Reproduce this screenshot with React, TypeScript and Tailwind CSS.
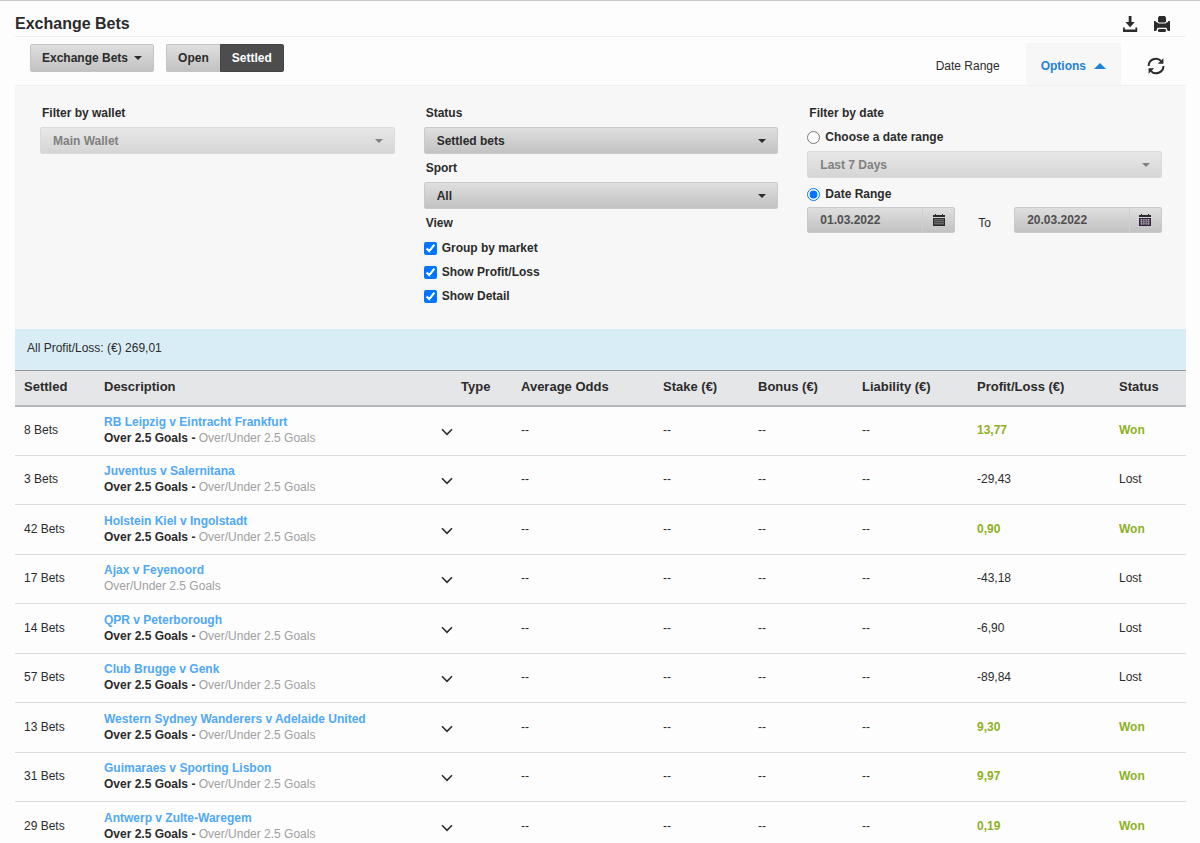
import type { ReactNode } from "react";
import clsx from "clsx";

type Bet = {
  count: number;
  event: string;
  selection?: string;
  profit: string;
  won: boolean;
};

const bets: Bet[] = [
  { count: 8, event: "RB Leipzig v Eintracht Frankfurt", selection: "Over 2.5 Goals", profit: "13,77", won: true },
  { count: 3, event: "Juventus v Salernitana", selection: "Over 2.5 Goals", profit: "-29,43", won: false },
  { count: 42, event: "Holstein Kiel v Ingolstadt", selection: "Over 2.5 Goals", profit: "0,90", won: true },
  { count: 17, event: "Ajax v Feyenoord", profit: "-43,18", won: false },
  { count: 14, event: "QPR v Peterborough", selection: "Over 2.5 Goals", profit: "-6,90", won: false },
  { count: 57, event: "Club Brugge v Genk", selection: "Over 2.5 Goals", profit: "-89,84", won: false },
  { count: 13, event: "Western Sydney Wanderers v Adelaide United", selection: "Over 2.5 Goals", profit: "9,30", won: true },
  { count: 31, event: "Guimaraes v Sporting Lisbon", selection: "Over 2.5 Goals", profit: "9,97", won: true },
  { count: 29, event: "Antwerp v Zulte-Waregem", selection: "Over 2.5 Goals", profit: "0,19", won: true },
];

const columns = [
  { title: "Settled", width: "w-[80px]" },
  { title: "Description", width: "w-[337px]" },
  { title: "", width: "w-[20px]" },
  { title: "Type", width: "w-[60px]" },
  { title: "Average Odds", width: "w-[142px]" },
  { title: "Stake (€)", width: "w-[95px]" },
  { title: "Bonus (€)", width: "w-[104px]" },
  { title: "Liability (€)", width: "w-[115px]" },
  { title: "Profit/Loss (€)", width: "w-[142px]" },
  { title: "Status", width: "w-[76px]" },
];

function Caret({ className }: { className?: string }) {
  return (
    <svg viewBox="0 0 8 4" className={clsx("h-1 w-2 fill-current", className)} aria-hidden="true">
      <path d="M0 0h8L4 4z" />
    </svg>
  );
}

function DownloadIcon() {
  return (
    <svg viewBox="0 0 16 16" className="size-4 fill-current" aria-hidden="true">
      <path d="M6.7 0h2.8v6h3.3l-4.7 5.2L3.4 6h3.3z" />
      <path d="M1 11.5h1.8v2h10.6v-2h1.8V16H1z" />
    </svg>
  );
}

function PrintIcon() {
  return (
    <svg viewBox="0 0 16 16" className="size-4 fill-current" aria-hidden="true">
      <path d="M5.2 0h5.6L12 1.4v3.8L10.8 6.4H5.2L4 5.2V1.4z" />
      <path d="M0 5h1.8v1.2h1.4l1.4 1.2h6.8l1.4-1.2h1.4V5H16v10h-2.2l-1.4-3.2H3.6L2.2 15H0z" />
      <path d="M4.6 13h6.8l.8 1.5-.8 1.5H4.6l-.8-1.5z" />
    </svg>
  );
}

function RefreshIcon() {
  return (
    <svg viewBox="0 0 18 18" className="size-[18px]" aria-hidden="true">
      <g fill="none" stroke="currentColor" strokeWidth="2">
        <path d="M1.6 9A7.2 7.2 0 0 1 14.2 4.2" />
        <path d="M16.4 9A7.2 7.2 0 0 1 3.8 13.8" />
      </g>
      <path fill="currentColor" d="M16.4 1.2v5.6h-5.6zM1.6 16.8v-5.6h5.6z" />
    </svg>
  );
}

function CalendarIcon({ grid }: { grid?: boolean }) {
  return (
    <svg viewBox="0 0 12 12" className="size-3" aria-hidden="true">
      <path fill="#2b2b2b" d="M0 1h2V0h1v1h6V0h1v1h2v2H0z" />
      <path fill={grid ? "#33203a" : "#2b2b2b"} d="M0 4h12v8H0z" />
      <path stroke="#c4c4c4" strokeWidth=".6" d="M1 5.8h10M1 7.8h10M1 9.8h10" />
      {grid && <path stroke="#c4c4c4" strokeWidth=".6" d="M2.5 5v6M4.8 5v6M7.2 5v6M9.5 5v6" />}
    </svg>
  );
}

type SelectFieldProps = { id: string; value: string; label?: string; disabled?: boolean };

function SelectField({ id, value, label, disabled }: SelectFieldProps) {
  return (
    <div className={clsx("relative", disabled ? "text-[#808080]" : "text-[#2b2b2b]")}>
      <select
        id={id}
        disabled={disabled}
        aria-label={label}
        className={clsx(
          "block h-[27px] w-full appearance-none rounded-xs border bg-linear-to-b px-3 text-xs font-bold",
          disabled ? "border-[#dadada] from-[#e8e8e8] to-[#d5d5d5]" : "border-[#c8cacb] from-[#dfdfdf] to-[#c2c2c2]"
        )}
      >
        <option>{value}</option>
      </select>
      <Caret className="pointer-events-none absolute top-3 right-3" />
    </div>
  );
}

function FieldLabel({ htmlFor, children }: { htmlFor: string; children: ReactNode }) {
  return (
    <label htmlFor={htmlFor} className="block h-7 pl-0.5 leading-7 font-bold">
      {children}
    </label>
  );
}

function DateField({ label, value, grid }: { label: string; value: string; grid?: boolean }) {
  return (
    <div className="flex h-[26px] min-w-0 flex-1 rounded-xs border border-[#c8cacb] bg-linear-to-b from-[#dfdfdf] to-[#c2c2c2]">
      <input aria-label={label} defaultValue={value} className="w-0 min-w-0 flex-1 pl-3 font-bold text-[#505050]" />
      <button
        type="button"
        aria-label={`Pick ${label}`}
        className="flex w-8 items-center justify-center border-l border-[#cfcfcf]"
      >
        <CalendarIcon grid={grid} />
      </button>
    </div>
  );
}

function Toolbar() {
  return (
    <div className="flex h-12 items-start justify-between">
      <div className="flex pt-[7px] pl-[15px] font-bold">
        <button
          type="button"
          className="mr-3 flex h-7 items-center gap-1.5 rounded-xs border border-[#c4c4c4] bg-linear-to-b from-[#dfdfdf] to-[#c2c2c2] px-[11px]"
        >
          Exchange Bets
          <Caret />
        </button>
        <button
          type="button"
          className="h-7 rounded-l-xs border border-r-0 border-[#c4c4c4] bg-linear-to-b from-[#dfdfdf] to-[#c2c2c2] px-[11px]"
        >
          Open
        </button>
        <button type="button" className="h-7 rounded-r-xs border border-[#444] bg-[#4d4d4d] px-[11px] text-white">
          Settled
        </button>
      </div>
      <div className="flex items-center self-end">
        <span className="pt-[3px] pr-[26px]">Date Range</span>
        <button
          type="button"
          className="flex h-[42px] items-center gap-2 bg-[#f7f7f7] px-[15px] pt-[3px] font-bold text-[#1e82d9]"
        >
          Options
          <svg viewBox="0 0 12 6" className="h-1.5 w-3 fill-current" aria-hidden="true">
            <path d="M0 6h12L6 0z" />
          </svg>
        </button>
        <button type="button" aria-label="Refresh" className="flex pt-[3px] pr-[21px] pl-[26px]">
          <RefreshIcon />
        </button>
      </div>
    </div>
  );
}

function Filters() {
  return (
    <form className="grid grid-cols-3 gap-[29px] border-t border-[#f0f0f0] bg-[#f7f7f7] pt-[13px] pr-6 pb-5 pl-[25px]">
      <div>
        <FieldLabel htmlFor="wallet">Filter by wallet</FieldLabel>
        <SelectField id="wallet" value="Main Wallet" disabled />
      </div>

      <div>
        <FieldLabel htmlFor="status">Status</FieldLabel>
        <SelectField id="status" value="Settled bets" />
        <FieldLabel htmlFor="sport">Sport</FieldLabel>
        <SelectField id="sport" value="All" />
        <fieldset>
          <legend className="h-7 pl-0.5 leading-7 font-bold">View</legend>
          {["Group by market", "Show Profit/Loss", "Show Detail"].map((option) => (
            <label key={option} className="flex h-6 items-center gap-[5px] pb-0.5 font-bold">
              <input type="checkbox" defaultChecked className="size-[13px]" />
              {option}
            </label>
          ))}
        </fieldset>
      </div>

      <fieldset>
        <legend className="h-7 pl-0.5 leading-7 font-bold">Filter by date</legend>
        <label className="mb-1 flex h-5 items-center gap-[5px] font-bold">
          <input type="radio" name="date" className="size-[13px]" />
          Choose a date range
        </label>
        <SelectField id="preset" label="Preset range" value="Last 7 Days" disabled />
        <label className="mt-1.5 mb-[3px] flex h-5 items-center gap-[5px] font-bold">
          <input type="radio" name="date" defaultChecked className="size-[13px]" />
          Date Range
        </label>
        <div className="flex">
          <DateField label="start date" value="01.03.2022" />
          <span className="w-[59px] pt-2 text-center">To</span>
          <DateField label="end date" value="20.03.2022" grid />
        </div>
      </fieldset>
    </form>
  );
}

function BetRow({ bet }: { bet: Bet }) {
  const result = bet.won ? "font-bold text-[#8db11f]" : "";

  return (
    <tr className="h-[50px] border-b border-[#dcdcdc] even:h-[49px] *:pb-0.5 *:pl-[9px]">
      <td>{bet.count} Bets</td>
      <td>
        <a href="#" className="block font-bold text-[#4fa8f8]">
          {bet.event}
        </a>
        {bet.selection && <b>{bet.selection} - </b>}
        <span className="text-[#a0a0a0]">Over/Under 2.5 Goals</span>
      </td>
      <td>
        <button type="button" aria-label={`Expand ${bet.event}`} className="block pt-1">
          <svg viewBox="0 0 12 8" className="h-2 w-3 fill-none stroke-current" strokeWidth="1.6" aria-hidden="true">
            <path d="M1 1.3l5 5 5-5" />
          </svg>
        </button>
      </td>
      <td />
      <td>--</td>
      <td>--</td>
      <td>--</td>
      <td>--</td>
      <td className={result}>{bet.profit}</td>
      <td className={result}>{bet.won ? "Won" : "Lost"}</td>
    </tr>
  );
}

export default function App() {
  return (
    <div className="min-h-screen border-t border-[#c8c8c8] bg-[#fdfdfd] pr-3.5 pl-[15px] font-['Liberation_Sans',Arial,sans-serif] text-xs text-[#2b2b2b]">
      <header className="flex h-9 items-center justify-between border-b border-[#eee] pt-[11px]">
        <h1 className="text-base font-bold">Exchange Bets</h1>
        <div className="flex gap-4 pr-4">
          <button type="button" aria-label="Download">
            <DownloadIcon />
          </button>
          <button type="button" aria-label="Print">
            <PrintIcon />
          </button>
        </div>
      </header>

      <Toolbar />
      <Filters />

      <p className="h-[41px] bg-[#d9edf7] px-3 leading-[39px]">All Profit/Loss: (€) 269,01</p>

      <table className="w-full table-fixed border-collapse text-left">
        <thead>
          <tr className="h-[35px] border-t border-b-2 border-t-[#999] border-b-[#b5b7b7] bg-[#e5e6e7]">
            {columns.map((column) => (
              <th key={column.title} className={clsx("pb-0.5 pl-[9px] text-[13px] whitespace-nowrap", column.width)}>
                {column.title}
              </th>
            ))}
          </tr>
        </thead>
        <tbody>
          {bets.map((bet) => (
            <BetRow key={bet.event} bet={bet} />
          ))}
        </tbody>
      </table>
    </div>
  );
}
